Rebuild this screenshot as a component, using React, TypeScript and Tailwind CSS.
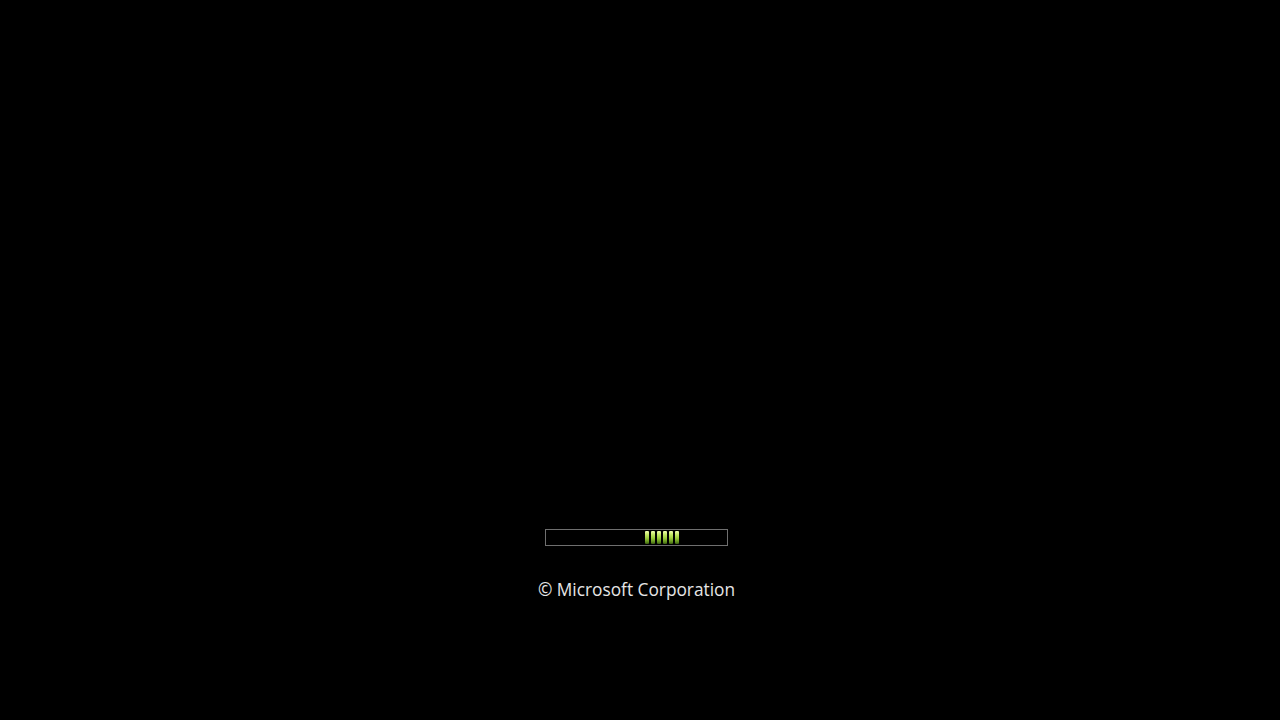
const segments = [0, 1, 2, 3, 4, 5];

function ProgressBar() {
  return (
    <div className="flex h-[17px] w-[183px] items-center gap-[2px] border border-[#6f6f6f] bg-black pl-[99px]">
      {segments.map((i) => (
        <div
          key={i}
          className="h-[13px] w-[4px] rounded-[1px] bg-[linear-gradient(to_bottom,#f2ffb0_0%,#c6e86a_25%,#9ccc3c_55%,#5f8f1c_85%,#3a5a10_100%)]"
        />
      ))}
    </div>
  );
}

export default function App() {
  return (
    <div className="flex h-[720px] w-[1280px] flex-col items-center bg-black pr-[7px] pt-[529px]">
      <ProgressBar />
      <p className="mt-[33px] text-[17.3px] leading-[22px] text-[#e6e6e6] [font-family:'Open_Sans','Noto_Sans',sans-serif]">
        © Microsoft Corporation
      </p>
    </div>
  );
}
